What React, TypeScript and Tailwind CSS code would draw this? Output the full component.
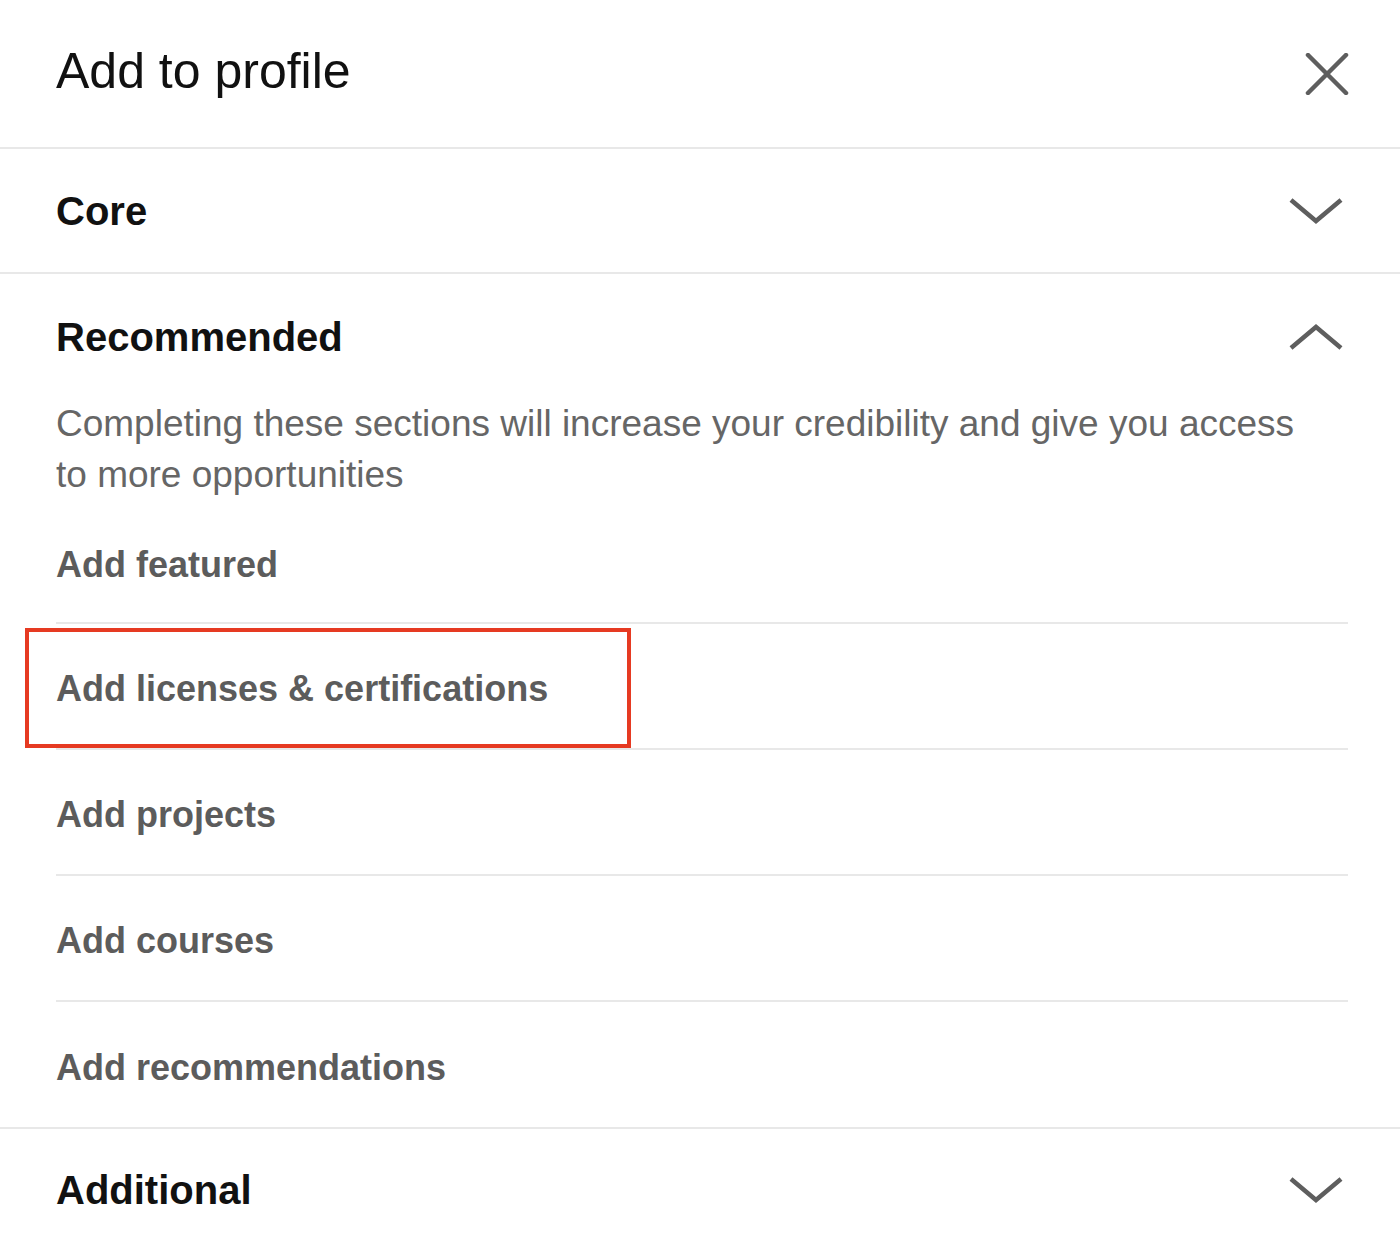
import React from 'react';

const font = { fontFamily: '"Liberation Sans", Arial, sans-serif' };

function Chevron({ up = false }: { up?: boolean }) {
  return (
    <svg width="56" height="30" viewBox="0 0 56 30" fill="none" className="shrink-0">
      <polyline
        points={up ? '3,26 28,5 53,26' : '3,4 28,25 53,4'}
        stroke="#5e5e5e"
        strokeWidth="4.5"
        strokeLinejoin="miter"
      />
    </svg>
  );
}

function CloseIcon() {
  return (
    <svg width="44" height="42" viewBox="0 0 44 42" fill="none">
      <path d="M3 2 L41 40 M41 2 L3 40" stroke="#5e5e5e" strokeWidth="4.5" strokeLinecap="round" />
    </svg>
  );
}

const items = [
  { label: 'Add featured', h: 'h-[122px] border-b-2' },
  { label: 'Add licenses & certifications', h: 'h-[126px] border-b-2' },
  { label: 'Add projects', h: 'h-[126px] border-b-2' },
  { label: 'Add courses', h: 'h-[126px] border-b-2' },
  { label: 'Add recommendations', h: 'h-[125px]' },
];

export default function App() {
  return (
    <div className="w-[1400px] h-[1244px] bg-white overflow-hidden" style={font}>
      {/* Header */}
      <div className="h-[149px] flex items-center justify-between pl-[56px] pr-[51px] border-b-2 border-[#e8e8e8]">
        <h1 className="text-[50px] leading-none text-[#111] -mt-[6px]">Add to profile</h1>
        <CloseIcon />
      </div>

      {/* Core */}
      <div className="h-[125px] flex items-center justify-between pl-[56px] pr-[56px] border-b-2 border-[#e8e8e8]">
        <span className="text-[40px] font-bold text-[#111] leading-none">Core</span>
        <Chevron />
      </div>

      {/* Recommended */}
      <div className="border-b-2 border-[#e8e8e8]">
        <div className="h-[126px] flex items-center justify-between pl-[56px] pr-[56px]">
          <span className="text-[40px] font-bold text-[#111] leading-none">Recommended</span>
          <Chevron up />
        </div>
        <div className="pl-[56px] pr-[52px]">
          <p className="text-[37px] leading-[51px] text-[#666] -mt-[2px] mb-[2px] pr-[30px]">
            Completing these sections will increase your credibility and give you access to more opportunities
          </p>
          <ul>
            {items.map((item, i) => (
              <li
                key={item.label}
                className={`relative flex items-center pt-[6px] text-[36px] font-bold text-[#5c5c5c] leading-none border-[#e8e8e8] ${item.h}`}
              >
                {item.label}
                {i === 1 && (
                  <div className="absolute left-[-31px] top-[4px] w-[606px] h-[120px] border-4 border-[#e63a22]" />
                )}
              </li>
            ))}
          </ul>
        </div>
      </div>

      {/* Additional */}
      <div className="h-[122px] flex items-center justify-between pl-[56px] pr-[56px]">
        <span className="text-[40px] font-bold text-[#111] leading-none">Additional</span>
        <Chevron />
      </div>
    </div>
  );
}
